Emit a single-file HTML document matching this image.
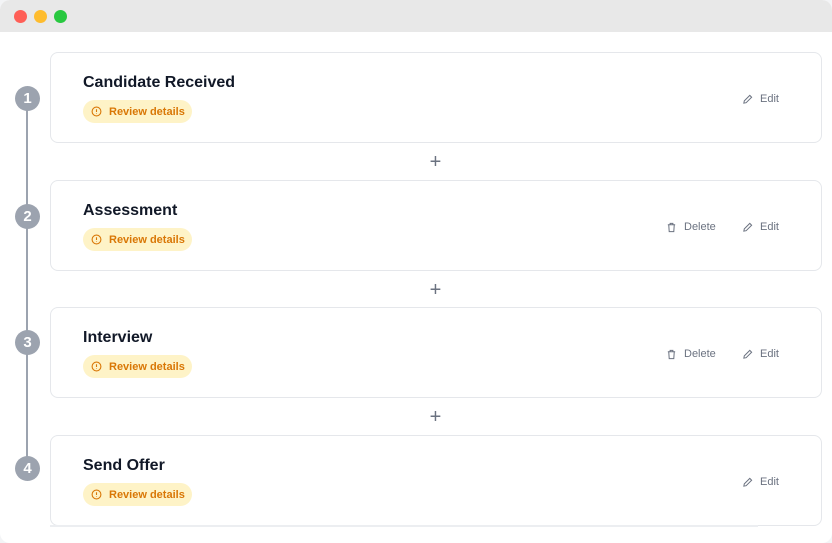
<!DOCTYPE html>
<html><head><style>
*{margin:0;padding:0;box-sizing:border-box}
body{width:832px;height:543px;background:#f3f4f6;font-family:"Liberation Sans",sans-serif;overflow:hidden}
.win{position:absolute;left:0;top:0;width:832px;height:543px;background:#fff;border-radius:10px;overflow:hidden}
.bar{height:32px;background:#e8e8e8;position:relative}
.dot{position:absolute;top:10px;width:13px;height:13px;border-radius:50%}
.line{position:absolute;left:26px;top:98px;width:2px;height:370px;background:#9ca3af}
.circ{position:absolute;left:15px;width:25px;height:25px;border-radius:50%;background:#9ca3af;color:#fff;font-weight:bold;font-size:15px;text-align:center;line-height:25px}
.card{position:absolute;left:50px;width:772px;height:91px;border:1px solid #e5e7eb;border-radius:8px;background:#fff}
.t{position:absolute;left:32px;top:21px;font-size:16px;font-weight:bold;color:#111827}
.b{position:absolute;left:32px;top:47px;height:23px;width:109px;background:#fef3c7;border-radius:12px;color:#d97706;font-size:11px;font-weight:bold;line-height:25px;padding-left:26px}
.b svg{position:absolute;left:8px;top:6px}
.act{position:absolute;top:40px;font-size:11px;color:#6b7280}
.act svg{position:absolute;left:0;top:1px}
.plus{position:absolute;left:428px;font-size:20px;color:#6b7280;font-weight:300;width:15px;text-align:center}
</style></head><body><div class="win">
<div class="bar"><div class="dot" style="left:14px;background:#ff5f57"></div><div class="dot" style="left:34px;background:#febc2e"></div><div class="dot" style="left:54px;background:#28c840"></div></div>
<div class="line"></div>
<div class="circ" style="top:86px">1</div>
<div class="circ" style="top:204px">2</div>
<div class="circ" style="top:330px">3</div>
<div class="circ" style="top:456px">4</div>

<div class="card" style="top:52px"><div class="t">Candidate Received</div>
<div class="b"><svg width="11" height="11" viewBox="0 0 12 12"><circle cx="6" cy="6" r="4.8" fill="none" stroke="#d97706" stroke-width="1.2"/><path d="M6 3.5v3M6 8v.6" stroke="#d97706" stroke-width="1.2"/></svg>Review details</div>
<div class="act" style="left:691px;padding-left:18px"><svg width="11" height="11" viewBox="0 0 12 12"><path d="M2 10l.5-2.5L8.5 1.5l2 2-6 6z" fill="none" stroke="#6b7280" stroke-width="1.1"/></svg>Edit</div></div>
<div class="plus" style="top:151px">+</div>

<div class="card" style="top:180px"><div class="t">Assessment</div>
<div class="b"><svg width="11" height="11" viewBox="0 0 12 12"><circle cx="6" cy="6" r="4.8" fill="none" stroke="#d97706" stroke-width="1.2"/><path d="M6 3.5v3M6 8v.6" stroke="#d97706" stroke-width="1.2"/></svg>Review details</div>
<div class="act" style="left:615px;padding-left:18px"><svg width="11" height="11" viewBox="0 0 12 12"><path d="M2 3h8M4.5 3V1.5h3V3M3 3l.5 7.5h5L9 3" fill="none" stroke="#6b7280" stroke-width="1.1"/></svg>Delete</div>
<div class="act" style="left:691px;padding-left:18px"><svg width="11" height="11" viewBox="0 0 12 12"><path d="M2 10l.5-2.5L8.5 1.5l2 2-6 6z" fill="none" stroke="#6b7280" stroke-width="1.1"/></svg>Edit</div></div>
<div class="plus" style="top:279px">+</div>

<div class="card" style="top:307px"><div class="t">Interview</div>
<div class="b"><svg width="11" height="11" viewBox="0 0 12 12"><circle cx="6" cy="6" r="4.8" fill="none" stroke="#d97706" stroke-width="1.2"/><path d="M6 3.5v3M6 8v.6" stroke="#d97706" stroke-width="1.2"/></svg>Review details</div>
<div class="act" style="left:615px;padding-left:18px"><svg width="11" height="11" viewBox="0 0 12 12"><path d="M2 3h8M4.5 3V1.5h3V3M3 3l.5 7.5h5L9 3" fill="none" stroke="#6b7280" stroke-width="1.1"/></svg>Delete</div>
<div class="act" style="left:691px;padding-left:18px"><svg width="11" height="11" viewBox="0 0 12 12"><path d="M2 10l.5-2.5L8.5 1.5l2 2-6 6z" fill="none" stroke="#6b7280" stroke-width="1.1"/></svg>Edit</div></div>
<div class="plus" style="top:406px">+</div>

<div class="card" style="top:435px"><div class="t">Send Offer</div>
<div class="b"><svg width="11" height="11" viewBox="0 0 12 12"><circle cx="6" cy="6" r="4.8" fill="none" stroke="#d97706" stroke-width="1.2"/><path d="M6 3.5v3M6 8v.6" stroke="#d97706" stroke-width="1.2"/></svg>Review details</div>
<div class="act" style="left:691px;padding-left:18px"><svg width="11" height="11" viewBox="0 0 12 12"><path d="M2 10l.5-2.5L8.5 1.5l2 2-6 6z" fill="none" stroke="#6b7280" stroke-width="1.1"/></svg>Edit</div></div>
<div style="position:absolute;left:50px;top:525px;width:708px;height:2px;background:#eceef1"></div>
</div></body></html>
